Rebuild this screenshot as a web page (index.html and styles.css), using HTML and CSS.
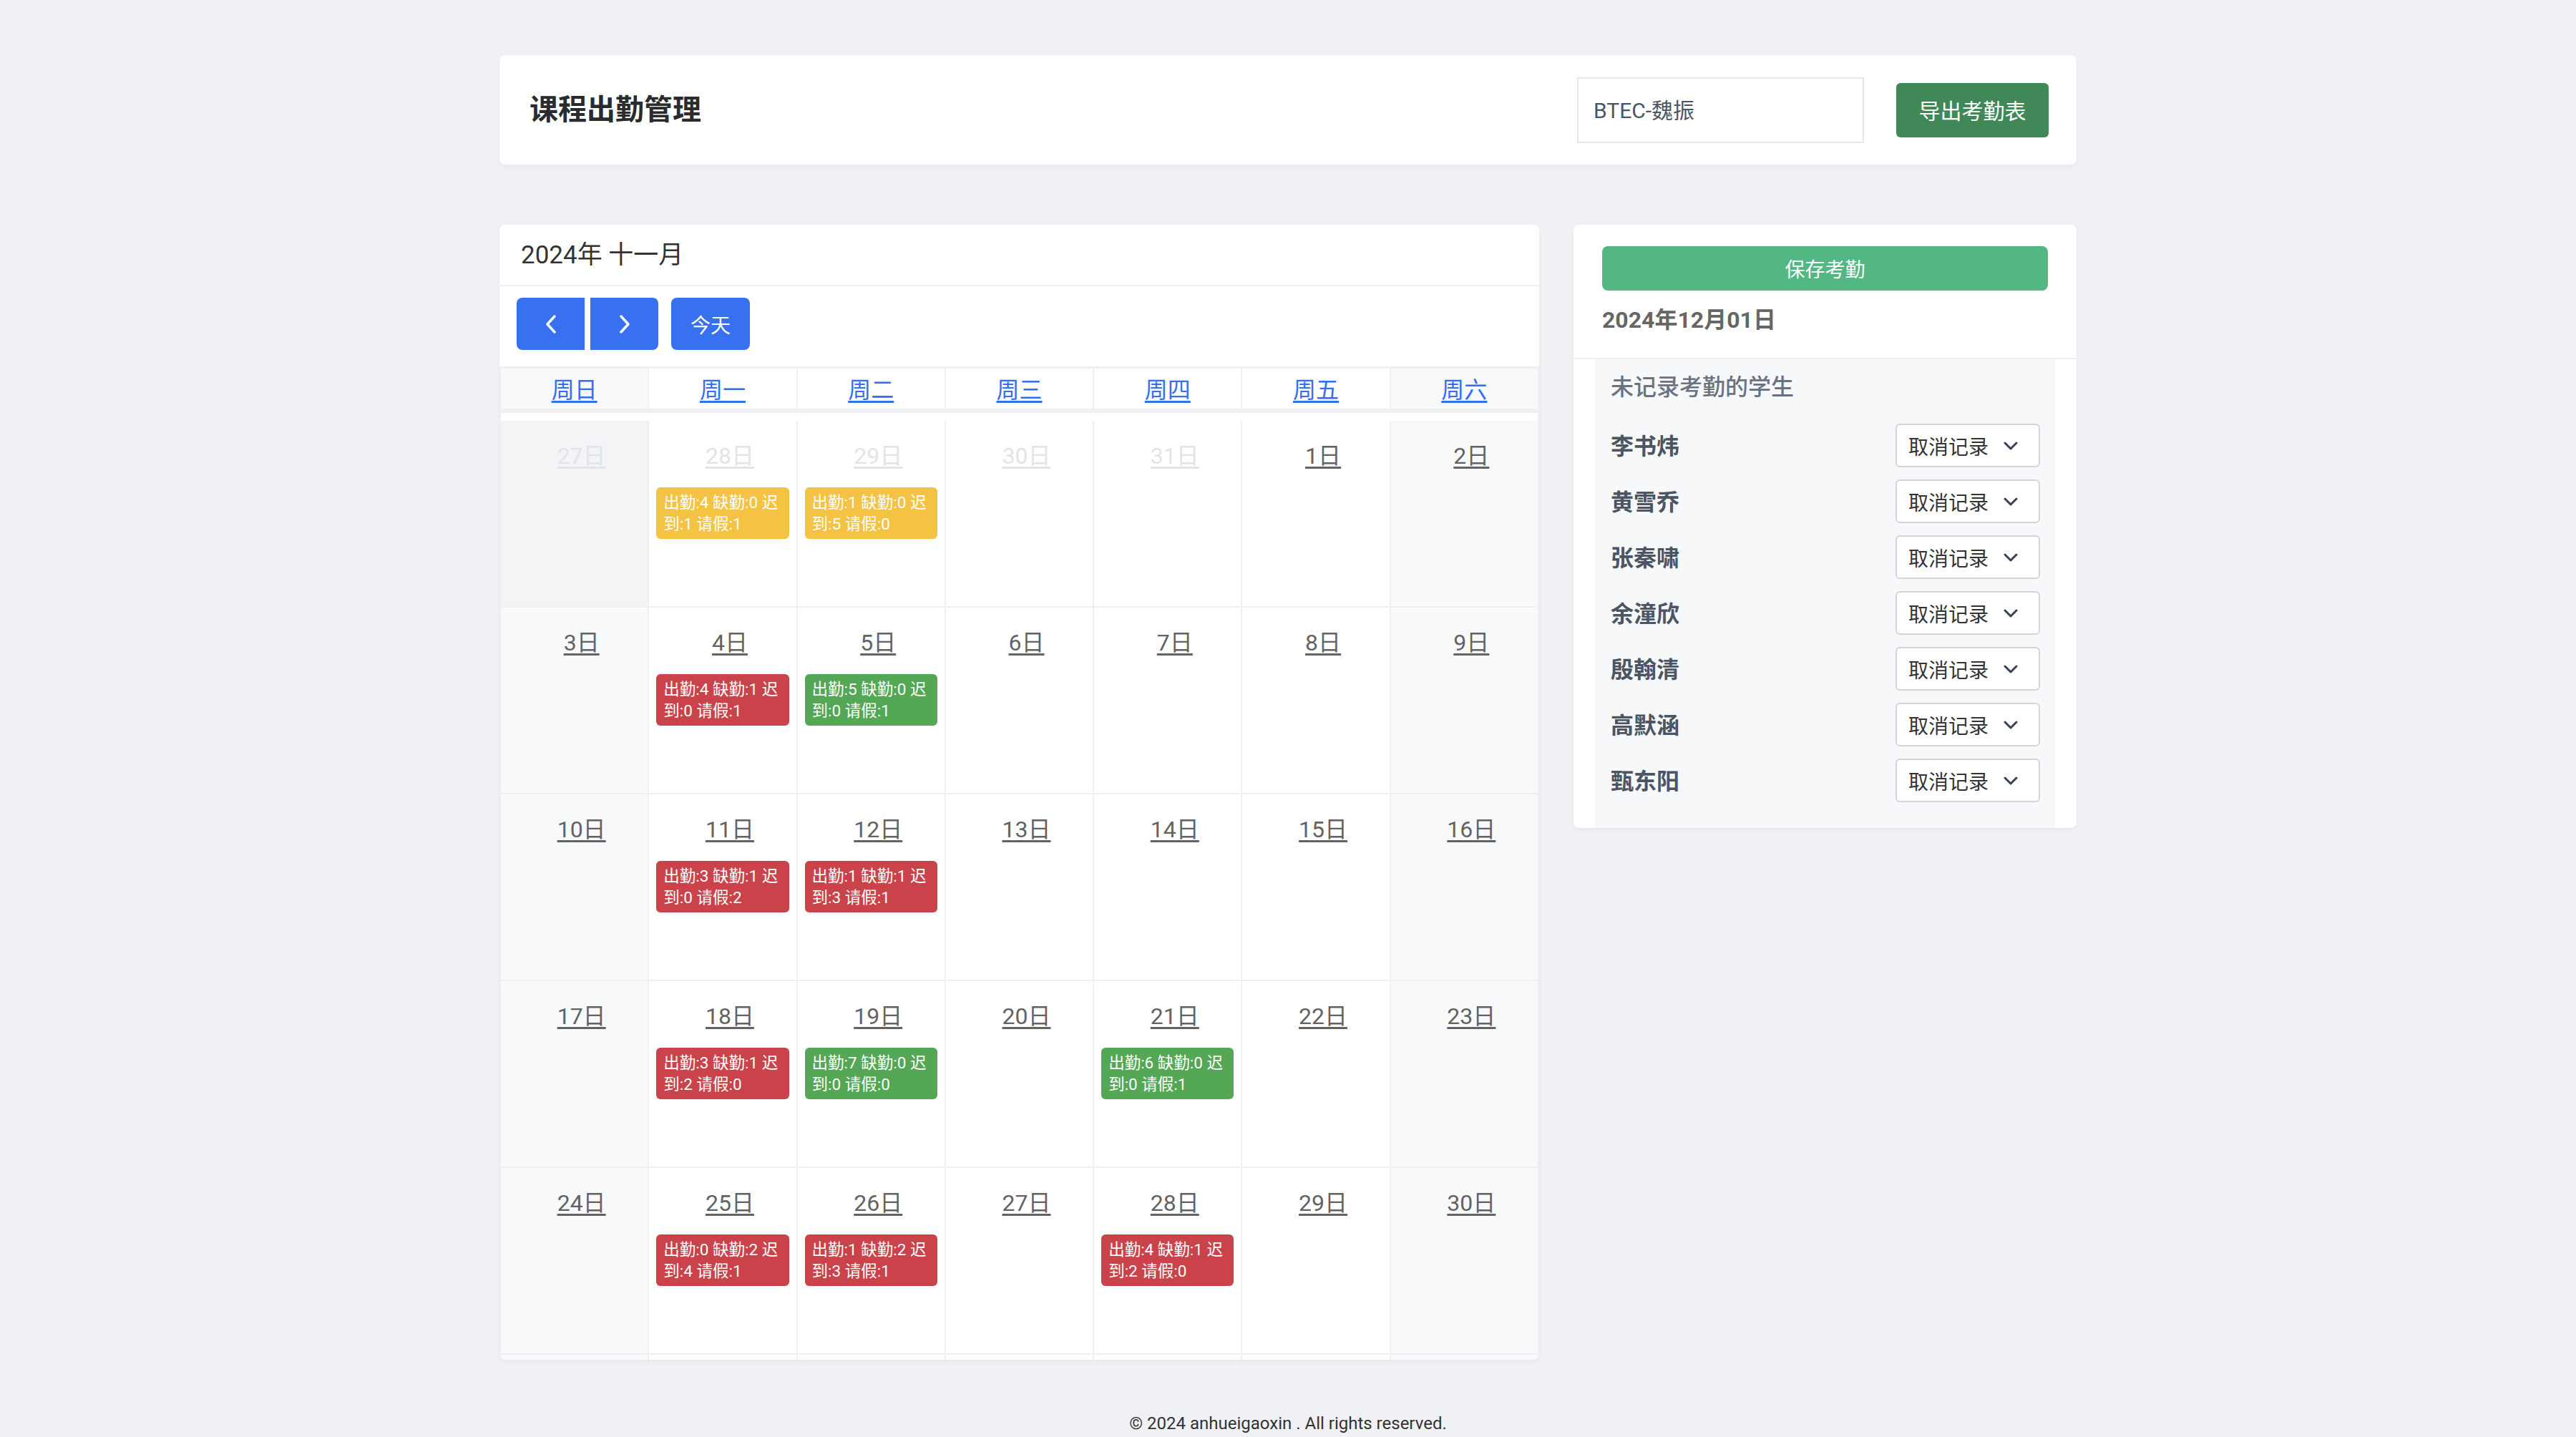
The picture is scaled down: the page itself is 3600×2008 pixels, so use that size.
FILE: index.html
```html
<!DOCTYPE html>
<html lang="zh-CN">
<head>
<meta charset="utf-8">
<title>课程出勤管理</title>
<link rel="stylesheet" href="styles.css">
</head>
<body>
<div class="page">
  <header class="topbar">
    <h1 class="title">课程出勤管理</h1>
    <div class="course-input">BTEC-魏振</div>
    <button class="export-btn">导出考勤表</button>
  </header>

  <main class="main">
    <section class="calendar">
      <div class="cal-title">2024年 十一月</div>
      <div class="toolbar">
        <div class="btn-group">
          <button class="nav-btn prev"><svg width="16" height="26" viewBox="0 0 16 26"><path d="M13 2 L3 13 L13 24" fill="none" stroke="#fff" stroke-width="3.5" stroke-linecap="round" stroke-linejoin="round"/></svg></button>
          <button class="nav-btn next"><svg width="16" height="26" viewBox="0 0 16 26"><path d="M3 2 L13 13 L3 24" fill="none" stroke="#fff" stroke-width="3.5" stroke-linecap="round" stroke-linejoin="round"/></svg></button>
        </div>
        <button class="today-btn">今天</button>
      </div>
      <div class="dow">
        <a class="we">周日</a><a>周一</a><a>周二</a><a>周三</a><a>周四</a><a>周五</a><a class="we">周六</a>
      </div>
      <div class="cal-body">
        <div class="week">
          <div class="day dim"><a class="num off">27日</a></div>
          <div class="day"><a class="num off">28日</a><div class="badge yellow">出勤:4 缺勤:0 迟<br>到:1 请假:1</div></div>
          <div class="day"><a class="num off">29日</a><div class="badge yellow">出勤:1 缺勤:0 迟<br>到:5 请假:0</div></div>
          <div class="day"><a class="num off">30日</a></div>
          <div class="day"><a class="num off">31日</a></div>
          <div class="day"><a class="num">1日</a></div>
          <div class="day we"><a class="num">2日</a></div>
        </div>
        <div class="week">
          <div class="day we"><a class="num">3日</a></div>
          <div class="day"><a class="num">4日</a><div class="badge red">出勤:4 缺勤:1 迟<br>到:0 请假:1</div></div>
          <div class="day"><a class="num">5日</a><div class="badge green">出勤:5 缺勤:0 迟<br>到:0 请假:1</div></div>
          <div class="day"><a class="num">6日</a></div>
          <div class="day"><a class="num">7日</a></div>
          <div class="day"><a class="num">8日</a></div>
          <div class="day we"><a class="num">9日</a></div>
        </div>
        <div class="week">
          <div class="day we"><a class="num">10日</a></div>
          <div class="day"><a class="num">11日</a><div class="badge red">出勤:3 缺勤:1 迟<br>到:0 请假:2</div></div>
          <div class="day"><a class="num">12日</a><div class="badge red">出勤:1 缺勤:1 迟<br>到:3 请假:1</div></div>
          <div class="day"><a class="num">13日</a></div>
          <div class="day"><a class="num">14日</a></div>
          <div class="day"><a class="num">15日</a></div>
          <div class="day we"><a class="num">16日</a></div>
        </div>
        <div class="week">
          <div class="day we"><a class="num">17日</a></div>
          <div class="day"><a class="num">18日</a><div class="badge red">出勤:3 缺勤:1 迟<br>到:2 请假:0</div></div>
          <div class="day"><a class="num">19日</a><div class="badge green">出勤:7 缺勤:0 迟<br>到:0 请假:0</div></div>
          <div class="day"><a class="num">20日</a></div>
          <div class="day"><a class="num">21日</a><div class="badge green">出勤:6 缺勤:0 迟<br>到:0 请假:1</div></div>
          <div class="day"><a class="num">22日</a></div>
          <div class="day we"><a class="num">23日</a></div>
        </div>
        <div class="week">
          <div class="day we"><a class="num">24日</a></div>
          <div class="day"><a class="num">25日</a><div class="badge red">出勤:0 缺勤:2 迟<br>到:4 请假:1</div></div>
          <div class="day"><a class="num">26日</a><div class="badge red">出勤:1 缺勤:2 迟<br>到:3 请假:1</div></div>
          <div class="day"><a class="num">27日</a></div>
          <div class="day"><a class="num">28日</a><div class="badge red">出勤:4 缺勤:1 迟<br>到:2 请假:0</div></div>
          <div class="day"><a class="num">29日</a></div>
          <div class="day we"><a class="num">30日</a></div>
        </div>
        <div class="week">
          <div class="day we"></div>
          <div class="day"></div>
          <div class="day"></div>
          <div class="day"></div>
          <div class="day"></div>
          <div class="day"></div>
          <div class="day we"></div>
        </div>
      </div>
    </section>

    <aside class="panel">
      <div class="panel-top">
        <button class="save-btn">保存考勤</button>
        <div class="date">2024年12月01日</div>
      </div>
      <div class="pending">
        <h3 class="pending-title">未记录考勤的学生</h3>
        <div class="list">
          <div class="row"><span class="name">李书炜</span><div class="select"><span>取消记录</span><svg width="20" height="12" viewBox="0 0 20 12"><path d="M2 2 L10 10 L18 2" fill="none" stroke="#374151" stroke-width="3" stroke-linecap="round" stroke-linejoin="round"/></svg></div></div>
          <div class="row"><span class="name">黄雪乔</span><div class="select"><span>取消记录</span><svg width="20" height="12" viewBox="0 0 20 12"><path d="M2 2 L10 10 L18 2" fill="none" stroke="#374151" stroke-width="3" stroke-linecap="round" stroke-linejoin="round"/></svg></div></div>
          <div class="row"><span class="name">张秦啸</span><div class="select"><span>取消记录</span><svg width="20" height="12" viewBox="0 0 20 12"><path d="M2 2 L10 10 L18 2" fill="none" stroke="#374151" stroke-width="3" stroke-linecap="round" stroke-linejoin="round"/></svg></div></div>
          <div class="row"><span class="name">余潼欣</span><div class="select"><span>取消记录</span><svg width="20" height="12" viewBox="0 0 20 12"><path d="M2 2 L10 10 L18 2" fill="none" stroke="#374151" stroke-width="3" stroke-linecap="round" stroke-linejoin="round"/></svg></div></div>
          <div class="row"><span class="name">殷翰清</span><div class="select"><span>取消记录</span><svg width="20" height="12" viewBox="0 0 20 12"><path d="M2 2 L10 10 L18 2" fill="none" stroke="#374151" stroke-width="3" stroke-linecap="round" stroke-linejoin="round"/></svg></div></div>
          <div class="row"><span class="name">高默涵</span><div class="select"><span>取消记录</span><svg width="20" height="12" viewBox="0 0 20 12"><path d="M2 2 L10 10 L18 2" fill="none" stroke="#374151" stroke-width="3" stroke-linecap="round" stroke-linejoin="round"/></svg></div></div>
          <div class="row"><span class="name">甄东阳</span><div class="select"><span>取消记录</span><svg width="20" height="12" viewBox="0 0 20 12"><path d="M2 2 L10 10 L18 2" fill="none" stroke="#374151" stroke-width="3" stroke-linecap="round" stroke-linejoin="round"/></svg></div></div>
        </div>
      </div>
    </aside>
  </main>

  <footer class="footer">© 2024 anhueigaoxin . All rights reserved.</footer>
</div>
</body>
</html>
```
FILE: styles.css
```css
* { box-sizing: border-box; }

body {
  margin: 0;
  background: #f0f1f5;
  font-family: Roboto, "Noto Sans CJK SC", sans-serif;
  color: #333;
}

button {
  font-family: inherit;
  border: none;
  cursor: pointer;
}

.page {
  width: 2204px;
  margin: 0 auto;
  padding-top: 77px;
}

/* top bar */
.topbar {
  height: 153px;
  background: #fff;
  border-radius: 8px;
  display: flex;
  align-items: center;
  padding: 0 39px 0 42px;
  box-shadow: 0 3px 6px rgba(0, 0, 0, 0.04);
}

.title {
  flex: 1;
  margin: 0;
  padding-bottom: 8px;
  font-size: 40px;
  font-weight: 700;
  color: #2b2b2b;
}

.course-input {
  width: 401px;
  height: 92px;
  border: 2px solid #e5e7eb;
  padding: 0 21px 3px;
  display: flex;
  align-items: center;
  font-size: 30px;
  color: #4b5563;
}

.export-btn {
  margin-left: 45px;
  width: 213px;
  height: 76px;
  padding-bottom: 3px;
  background: #418858;
  color: #fff;
  border-radius: 6px;
  font-size: 30px;
}

/* main layout */
.main {
  display: grid;
  grid-template-columns: 1453px 703px;
  gap: 48px;
  align-items: start;
  margin-top: 84px;
}

/* calendar */
.calendar {
  height: 1586px;
  background: #fff;
  border-radius: 8px;
  overflow: hidden;
  display: flex;
  flex-direction: column;
  box-shadow: 0 3px 6px rgba(0, 0, 0, 0.04);
}

.cal-title {
  height: 86px;
  border-bottom: 2px solid #eeeff1;
  padding: 0 0 8px 30px;
  display: flex;
  align-items: center;
  font-size: 35px;
  color: #333;
}

.toolbar {
  display: flex;
  gap: 18px;
  padding: 16px 24px 23px;
}

.btn-group {
  display: flex;
  gap: 8px;
}

.nav-btn {
  width: 95px;
  height: 73px;
  background: #3771f0;
  display: flex;
  align-items: center;
  justify-content: center;
}

.nav-btn.prev { border-radius: 8px 0 0 8px; }
.nav-btn.next { border-radius: 0 8px 8px 0; }

.today-btn {
  width: 110px;
  height: 73px;
  background: #3771f0;
  border-radius: 8px;
  color: #fff;
  font-size: 28px;
}

.dow {
  display: grid;
  grid-template-columns: repeat(7, 1fr);
  column-gap: 2px;
  background: #eef0f2;
  border: 2px solid #eef0f2;
  border-top-width: 3px;
  border-bottom-width: 6px;
}

.dow a {
  height: 56px;
  padding-bottom: 3px;
  background: #fff;
  display: flex;
  align-items: center;
  justify-content: center;
  font-size: 32px;
  color: #3370f0;
  text-decoration: underline;
  text-underline-offset: 4px;
}

.dow a.we { background: #f8f9fb; }

.cal-body {
  flex: 1;
  overflow: hidden;
  background: #fff;
  padding-top: 11px;
  border-left: 2px solid #eef0f2;
  border-right: 2px solid #eef0f2;
}

.week {
  display: grid;
  grid-template-columns: repeat(7, 1fr);
  column-gap: 2px;
  background: #eef0f2;
  border-bottom: 2px solid #eef0f2;
}

.day {
  height: 259px;
  background: #fff;
  padding: 25px 10px;
}

.day.we { background: #f8f9fb; }
.day.dim { background: #f3f4f6; }

.num {
  display: block;
  text-align: center;
  padding-left: 20px;
  font-size: 32px;
  line-height: 48px;
  color: #636363;
  text-decoration: underline;
  text-underline-offset: 4px;
}

.num.off { color: #e2e4e8; }

.badge {
  margin-top: 20px;
  border-radius: 6px;
  padding: 6px 10px;
  font-size: 22.5px;
  line-height: 30px;
  color: #fff;
  white-space: nowrap;
}

.badge.yellow { background: #f5c343; }
.badge.red { background: #cb434a; }
.badge.green { background: #53a755; }

/* right panel */
.panel {
  background: #fff;
  border-radius: 8px;
  overflow: hidden;
  box-shadow: 0 3px 6px rgba(0, 0, 0, 0.04);
}

.panel-top {
  padding: 30px 40px 29px;
  border-bottom: 2px solid #eeeff1;
}

.save-btn {
  width: 100%;
  height: 62px;
  background: #53b784;
  border-radius: 8px;
  color: #fff;
  font-size: 28px;
}

.date {
  margin-top: 17px;
  font-size: 32px;
  line-height: 48px;
  font-weight: 700;
  color: #666;
}

.pending {
  margin: 0 30px;
  background: #f7f8fa;
  padding: 15px 21px 36px 22px;
}

.pending-title {
  margin: 0;
  font-size: 32px;
  line-height: 48px;
  font-weight: 500;
  color: #6b7280;
}

.list {
  margin-top: 27px;
  display: flex;
  flex-direction: column;
  gap: 17px;
}

.row {
  height: 61px;
  display: flex;
  align-items: center;
  justify-content: space-between;
}

.name {
  font-size: 32px;
  font-weight: 700;
  color: #4b5563;
  padding-bottom: 3px;
}

.select {
  width: 202px;
  height: 61px;
  background: #fff;
  border: 2px solid #d1d5db;
  border-radius: 6px;
  padding: 0 29px 0 16px;
  display: flex;
  align-items: center;
  justify-content: space-between;
  font-size: 28px;
  color: #333;
}

/* footer */
.footer {
  padding: 71px 0 20px;
  text-align: center;
  font-size: 24px;
  line-height: 36px;
  color: #333;
}
```
